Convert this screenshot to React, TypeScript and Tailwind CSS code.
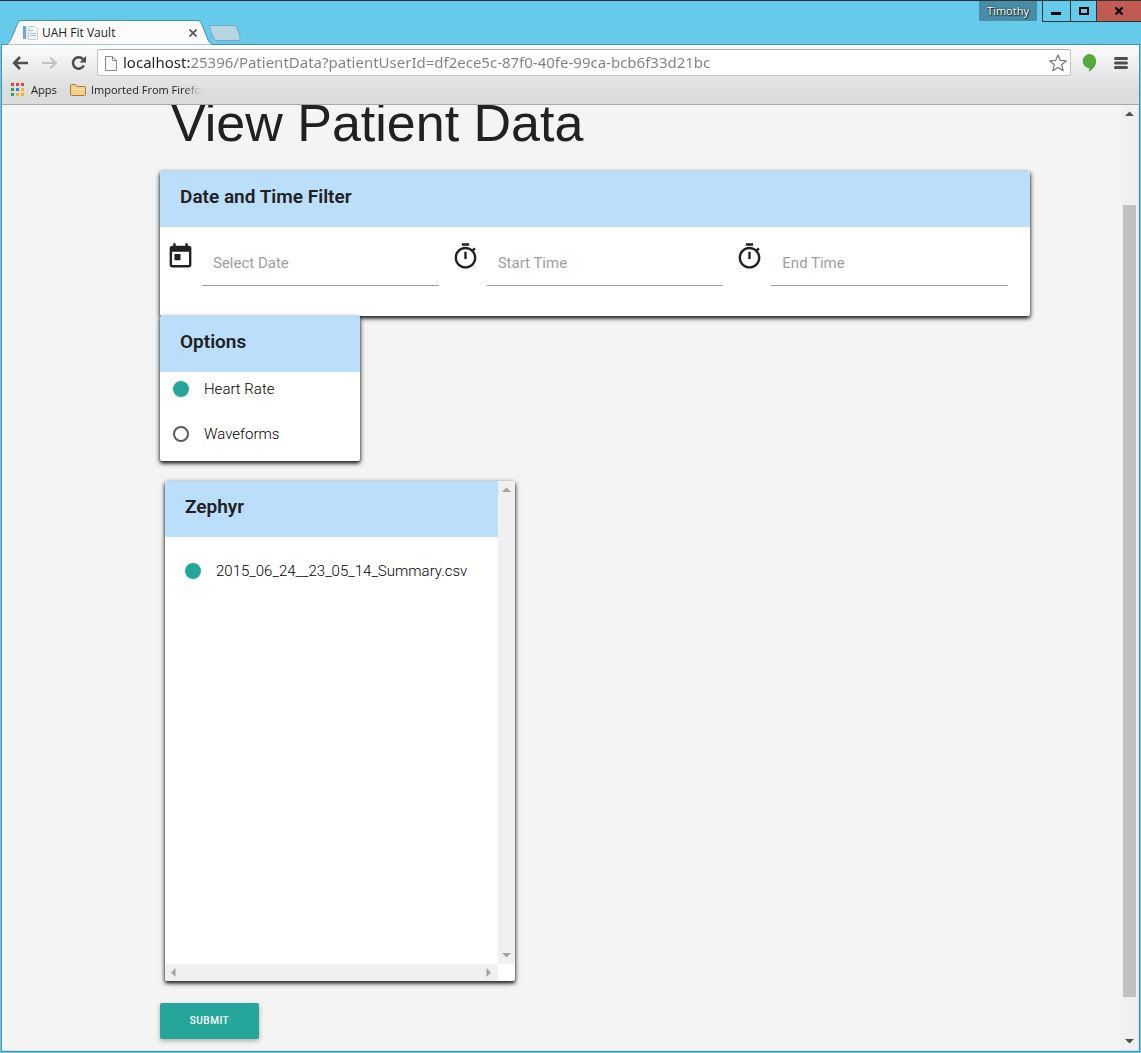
import React from "react";

const cardShadow = "shadow-[0_2px_5px_0_rgba(0,0,0,0.85),0_2px_3px_0_rgba(0,0,0,0.4)]";

function TitleBar() {
  return (
    <header className="relative flex h-11 items-start justify-between border-t border-[#2d3436]">
      <div className="flex self-end">
        <div className="relative ml-2 flex h-6 w-[204px] items-center pt-[2px] pl-[14px] pr-[11px]">
          <svg className="absolute inset-x-0 -bottom-px h-[25px] w-full" viewBox="0 0 204 25" preserveAspectRatio="none" aria-hidden="true">
            <path d="M-3 25 C1 24 2 21 4 17 L9 5 C10 2 11 0.5 14 0.5 H189 C192 0.5 193 2 194 5 L199 17 C200 21 202 24 206 25 Z" fill="#fbfbfb" stroke="#4594ab" />
          </svg>
          <svg className="relative h-4 w-4" viewBox="0 0 16 16" aria-hidden="true">
            <rect x="1" y="1" width="3" height="13" fill="#6fa5d6" />
            <path d="M4 1h6v13H4z" fill="#e3e9f0" />
            <path d="M7.500 1.500h5.500l2.500 2.500v10.500h-9V6z" fill="#f4f5f7" stroke="#c9cfd8" />
            <path d="M7 5.500h4M8 8.500h6M8 10.500h6" stroke="#b4becb" />
          </svg>
          <span className="relative ml-1 flex-1 text-[12px] leading-4 text-[#222]">UAH Fit Vault</span>
          <button type="button" aria-label="Close tab" className="relative flex h-4 w-4 items-center justify-center">
            <svg className="h-2 w-2" viewBox="0 0 8 8" aria-hidden="true">
              <path d="M.5.5l7 7M7.500.5l-7 7" stroke="#555" strokeWidth="1.700" />
            </svg>
          </button>
        </div>
        <button type="button" aria-label="New tab" className="-ml-[5px] h-5 w-9 self-end">
          <svg className="h-5 w-9" viewBox="0 0 36 20" aria-hidden="true">
            <path d="M5 1.500H27C29 1.500 29.500 3 30 4L33 12.500C33.500 14.500 33 16.500 31 16.500H10C8 16.500 7 15 6 12.500L2.500 4C2 2.500 3 1.500 5 1.500Z" fill="#b7d4e1" stroke="#6fa9bf" />
          </svg>
        </button>
      </div>
      <div className="flex text-black">
        <button type="button" className="mr-[5px] h-5 w-[58px] bg-[#468da5] text-[11px] leading-5 text-white [text-shadow:0_0_2px_#222,1px_1px_1px_#222]">Timothy</button>
        <button type="button" aria-label="Minimize" className="flex h-[21px] w-7 items-center justify-center border-b border-l border-[#2d3436]">
          <svg className="h-3 w-3" viewBox="0 0 12 12" aria-hidden="true"><path d="M0 7h10v3H0z" /></svg>
        </button>
        <button type="button" aria-label="Maximize" className="flex h-[21px] w-[26px] items-center justify-center border-b border-l border-[#2d3436]">
          <svg className="h-3 w-3" viewBox="0 0 12 12" aria-hidden="true"><path d="M2 3h8v6H2z" fill="none" stroke="black" strokeWidth="2" /></svg>
        </button>
        <button type="button" aria-label="Close" className="flex h-[21px] w-[45px] items-center justify-center border-b border-l border-[#2d3436] bg-[#c15b52]">
          <svg className="h-2 w-2" viewBox="0 0 8 8" aria-hidden="true"><path d="M.5.5l7 7M7.500.5l-7 7" stroke="black" strokeWidth="2.200" /></svg>
        </button>
      </div>
    </header>
  );
}

const appColors = [
  ["#e8413a", "#e8413a", "#e8413a"],
  ["#2fa35c", "#2f86e8", "#f3b51d"],
  ["#2fa35c", "#f3b51d", "#f3b51d"],
];

function Toolbar() {
  return (
    <div className="border-b border-[#a9a9a9] bg-linear-to-b from-[#fbfbfb] to-[#dcdcdc] to-80%">
      <div className="flex h-[35px] items-center pl-[10px] pr-[11px]">
        <button type="button" aria-label="Back" className="h-4 w-4">
          <svg className="h-4 w-4" viewBox="0 0 16 16" fill="none" stroke="#4d4d4d" strokeWidth="2.600" aria-hidden="true"><path d="M8 2L2.200 8L8 14M2.500 8H16" /></svg>
        </button>
        <button type="button" aria-label="Forward" className="ml-[14px] h-4 w-4">
          <svg className="h-4 w-4" viewBox="0 0 16 16" fill="none" stroke="#c3c3c3" strokeWidth="2.200" aria-hidden="true"><path d="M8 2.500L13.800 8L8 13.500M13.500 8H0" /></svg>
        </button>
        <button type="button" aria-label="Reload" className="ml-[13px] h-4 w-4">
          <svg className="h-4 w-4" viewBox="0 0 16 16" aria-hidden="true">
            <path d="M12 4.200A5.700 5.700 0 1 0 12.800 10.500" fill="none" stroke="#4d4d4d" strokeWidth="2.500" />
            <path d="M15 1V7.500H8.500z" fill="#4d4d4d" />
          </svg>
        </button>
        <div className="ml-[10px] flex h-[27px] flex-1 items-center rounded-[3px] border border-[#c5c5c5] border-t-[#a9a9a9] bg-white pl-[7px] pr-[3px]">
          <svg className="h-4 w-3" viewBox="0 0 12 16" fill="#f8f8f8" stroke="#8a8a8a" aria-hidden="true"><path d="M.5 1.500h7l4 4v10H.5zM7.500 1.500v4h4" /></svg>
          <input
            aria-label="Address"
            className="ml-[6px] h-6 min-w-0 flex-1 bg-linear-to-r from-[#222] from-[67px] to-[#808080] to-[67px] bg-clip-text pb-[2px] font-['Noto_Sans',sans-serif] text-[15px] text-[#808080] outline-none [-webkit-text-fill-color:transparent]"
            defaultValue="localhost:25396/PatientData?patientUserId=df2ece5c-87f0-40fe-99ca-bcb6f33d21bc"
          />
          <button type="button" aria-label="Bookmark this page" className="h-[18px] w-[18px]">
            <svg className="h-[18px] w-[18px]" viewBox="0 0 18 18" fill="#fff" stroke="#777" strokeWidth="1.200" strokeLinejoin="round" aria-hidden="true">
              <path d="M9 .9L11.300 6.400L17.300 6.900L12.700 10.800L14.200 16.800L9 13.500L3.800 16.800L5.300 10.800L.7 6.900L6.700 6.400Z" />
            </svg>
          </button>
        </div>
        <button type="button" aria-label="Hangouts" className="ml-[10px] h-5 w-4">
          <svg className="h-5 w-4" viewBox="0 0 16 20" aria-hidden="true"><path d="M8 1a7.200 7.200 0 0 1 7.200 7.200C15.200 12.500 12 16 8.200 18.800V15.300A7.200 7.200 0 0 1 8 1Z" fill="#54a83e" /></svg>
        </button>
        <button type="button" aria-label="Menu" className="ml-[17px] h-4 w-[14px]">
          <svg className="h-4 w-[14px]" viewBox="0 0 14 16" aria-hidden="true"><path d="M1.500 3.500h11M1.500 8h11M1.500 12.500h11" stroke="#4d4d4d" strokeWidth="3" strokeLinecap="round" /></svg>
        </button>
      </div>
      <nav aria-label="Bookmarks" className="flex h-6 items-start pt-px pl-[9px] text-[11px] leading-[18px] text-[#222]">
        <a href="#apps" className="flex items-center">
          <svg className="h-[14px] w-[14px]" viewBox="0 0 14 14" aria-hidden="true">
            {appColors.map((row, r) => row.map((c, i) => <rect key={`${r}-${i}`} x={i * 5} y={r * 5} width="3" height="3" fill={c} />))}
          </svg>
          <span className="ml-[6px] w-7">Apps</span>
        </a>
        <a href="#imported" className="ml-[11px] flex items-center">
          <svg className="h-[14px] w-4" viewBox="0 0 16 14" aria-hidden="true">
            <path d="M.5 11.500V2.500Q.5 1.500 1.500 1.500H5.500L7 3.500H14.500Q15.500 3.500 15.500 4.500V11.500Q15.500 12.500 14.500 12.500H1.500Q.5 12.500.5 11.500Z" fill="#f7cf86" stroke="#a07a3c" />
            <path d="M1.500 6H14.500V7H1.500Z" fill="#fde9bd" />
          </svg>
          <span className="ml-[5px] whitespace-nowrap mask-r-from-85% mask-r-to-100%">Imported From Firefo</span>
        </a>
      </nav>
    </div>
  );
}

function Arrow({ dir, color }: { dir: "up" | "down" | "left" | "right"; color: string }) {
  const paths = { up: "M4 11L8.500 6.500L13 11Z", down: "M4 6L8.500 10.500L13 6Z", left: "M10.500 4L6 8.500L10.500 13Z", right: "M5.500 4L10 8.500L5.500 13Z" };
  return (
    <svg className="h-[17px] w-[17px] shrink-0" viewBox="0 0 17 17" aria-hidden="true">
      <path d={paths[dir]} fill={color} />
    </svg>
  );
}

function CardHeader({ children }: { children: React.ReactNode }) {
  return <h2 className="h-14 bg-[#bbdefb] px-5 pt-[14px] text-[19px] leading-6 font-semibold">{children}</h2>;
}

function TodayIcon() {
  return (
    <svg className="h-[29px] w-[29px] shrink-0" viewBox="0 0 24 24" fill="#212121" aria-hidden="true">
      <path d="M19 3h-1V1h-2v2H8V1H6v2H5c-1.110 0-1.990.9-1.990 2L3 19c0 1.100.89 2 2 2h14c1.100 0 2-.9 2-2V5c0-1.100-.9-2-2-2zm0 16H5V8h14v11zM7 10h5v5H7z" />
    </svg>
  );
}

function TimerIcon() {
  return (
    <svg className="h-[29px] w-[29px] shrink-0" viewBox="0 0 24 24" fill="#212121" aria-hidden="true">
      <path d="M15 1H9v2h6V1zm-4 13h2V8h-2v6zm8.030-6.610l1.420-1.420c-.43-.51-.9-.99-1.410-1.410l-1.420 1.420C16.070 4.740 14.120 4 12 4c-4.970 0-9 4.030-9 9s4.020 9 9 9 9-4.030 9-9c0-2.120-.74-4.070-1.970-5.610zM12 20c-3.870 0-7-3.130-7-7s3.130-7 7-7 7 3.130 7 7-3.130 7-7 7z" />
    </svg>
  );
}

function Field({ icon, label }: { icon: React.ReactNode; label: string }) {
  return (
    <label className="flex px-[6px]">
      {icon}
      <input
        aria-label={label}
        placeholder={label}
        className="ml-[7px] h-11 min-w-0 flex-1 border-b border-[#9e9e9e] bg-transparent pb-[2px] pl-[11px] text-[15px] outline-none placeholder:text-[#9e9e9e]"
      />
    </label>
  );
}

function Radio({ name, label, checked }: { name: string; label: string; checked?: boolean }) {
  return (
    <label className="flex h-6 items-center gap-[15px] text-[15px] font-light whitespace-nowrap text-black">
      <input
        type="radio"
        name={name}
        defaultChecked={checked}
        className="h-4 w-4 shrink-0 appearance-none rounded-full border-2 border-[#5a5a5a] checked:border-[#26a69a] checked:bg-[#26a69a]"
      />
      {label}
    </label>
  );
}

export default function App() {
  return (
    <div className="flex h-screen flex-col overflow-hidden bg-[#66cbea] font-['Open_Sans','Noto_Sans',sans-serif]">
      <TitleBar />
      <div className="mx-px mb-px flex min-h-0 flex-1 flex-col border border-[#4594ab]">
        <Toolbar />
        <div className="flex min-h-0 flex-1 border-r border-b border-[#dedede] bg-[#f4f4f4] font-[Roboto,sans-serif] text-[#212121]">
          <main className="min-w-0 flex-1 overflow-hidden pl-[158px] pr-[91px]">
            <h1 className="pl-[11px] font-['Liberation_Sans',sans-serif] text-[52px] leading-9 whitespace-nowrap">View Patient Data</h1>
            <form onSubmit={(e) => e.preventDefault()}>
              <section className={`mt-[30px] overflow-hidden rounded-[2px] bg-white ${cardShadow}`}>
                <CardHeader>Date and Time Filter</CardHeader>
                <div className="grid grid-cols-3 pt-[15px] pr-4 pb-[30px]">
                  <Field icon={<TodayIcon />} label="Select Date" />
                  <Field icon={<TimerIcon />} label="Start Time" />
                  <Field icon={<TimerIcon />} label="End Time" />
                </div>
              </section>
              <section className={`w-[200px] overflow-hidden rounded-[2px] bg-white ${cardShadow}`}>
                <CardHeader>Options</CardHeader>
                <div className="flex flex-col gap-[21px] px-[13px] pt-[5px] pb-[15px]">
                  <Radio name="option" label="Heart Rate" checked />
                  <Radio name="option" label="Waveforms" />
                </div>
              </section>
              <section className={`mt-5 ml-[5px] grid h-[500px] w-[350px] grid-cols-[1fr_17px] grid-rows-[1fr_17px] overflow-hidden rounded-[2px] bg-white ${cardShadow}`}>
                <div className="overflow-hidden">
                  <CardHeader>Zephyr</CardHeader>
                  <div className="px-5 pt-[22px]">
                    <Radio name="file" label="2015_06_24__23_05_14_Summary.csv" checked />
                  </div>
                </div>
                <div className="flex flex-col justify-between bg-[#f0f0f0]">
                  <Arrow dir="up" color="#a3a3a3" />
                  <Arrow dir="down" color="#a3a3a3" />
                </div>
                <div className="flex justify-between bg-[#f0f0f0]">
                  <Arrow dir="left" color="#a3a3a3" />
                  <Arrow dir="right" color="#a3a3a3" />
                </div>
              </section>
              <button type="submit" className="mt-[22px] block h-9 w-[99px] rounded-[2px] bg-[#26a69a] pb-px text-[10px] font-medium tracking-[0.5px] text-white shadow-[0_2px_5px_0_rgba(0,0,0,0.3)]">
                SUBMIT
              </button>
            </form>
          </main>
          <div className="flex w-[17px] flex-col bg-[#f0f0f0]">
            <Arrow dir="up" color="#505050" />
            <div className="flex flex-1 flex-col px-[2px] pt-[83px] pb-9">
              <div className="flex-1 bg-[#c0c0c0]" />
            </div>
            <Arrow dir="down" color="#505050" />
          </div>
        </div>
      </div>
    </div>
  );
}
